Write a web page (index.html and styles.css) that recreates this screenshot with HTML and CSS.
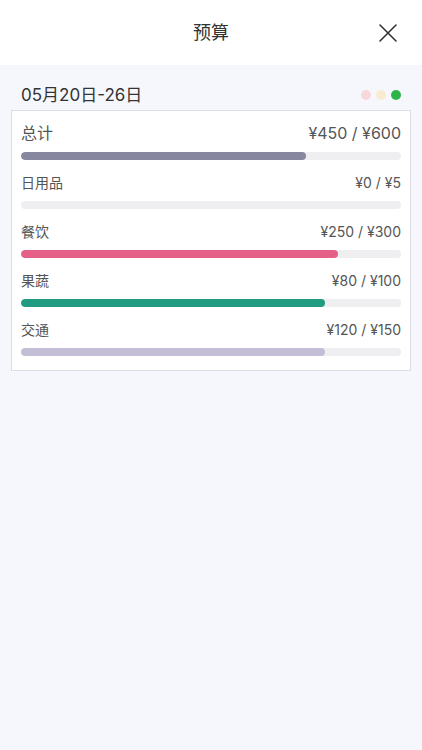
FILE: index.html
```html
<!DOCTYPE html>
<html lang="zh-CN">
<head>
    <meta charset="UTF-8">
    <meta name="viewport" content="width=device-width, initial-scale=1.0">
    <title>预算</title>
    <link rel="stylesheet" href="styles.css">
</head>
<body>

    <header class="topbar">
        <span></span>
        <h1 class="title">预算</h1>
        <button class="close-btn" aria-label="关闭">
            <svg width="20" height="20" viewBox="0 0 20 20">
                <path d="M2 2 L18 18 M18 2 L2 18" stroke="#333" stroke-width="1.6" fill="none" stroke-linecap="round"/>
            </svg>
        </button>
    </header>

    <main class="content">
        <div class="period">
            <span class="period-date">05月20日-26日</span>
            <div class="dots">
                <span class="dot dot-red"></span>
                <span class="dot dot-yellow"></span>
                <span class="dot dot-green"></span>
            </div>
        </div>

        <section class="card">
            <div class="budget-row total">
                <div class="row-head">
                    <span class="label">总计</span>
                    <span class="amount">¥450 / ¥600</span>
                </div>
                <div class="track"><div class="fill fill-total" style="width: 75%"></div></div>
            </div>
            <div class="budget-row">
                <div class="row-head">
                    <span class="label">日用品</span>
                    <span class="amount">¥0 / ¥5</span>
                </div>
                <div class="track"><div class="fill" style="width: 0%"></div></div>
            </div>
            <div class="budget-row">
                <div class="row-head">
                    <span class="label">餐饮</span>
                    <span class="amount">¥250 / ¥300</span>
                </div>
                <div class="track"><div class="fill fill-food" style="width: 83.33%"></div></div>
            </div>
            <div class="budget-row">
                <div class="row-head">
                    <span class="label">果蔬</span>
                    <span class="amount">¥80 / ¥100</span>
                </div>
                <div class="track"><div class="fill fill-veg" style="width: 80%"></div></div>
            </div>
            <div class="budget-row">
                <div class="row-head">
                    <span class="label">交通</span>
                    <span class="amount">¥120 / ¥150</span>
                </div>
                <div class="track"><div class="fill fill-transit" style="width: 80%"></div></div>
            </div>
        </section>
    </main>

</body>
</html>
```

FILE: styles.css
```css
* {
    box-sizing: border-box;
}
html, body {
    height: 100%;
}
body {
    margin: 0;
    font-family: Inter, "Noto Sans CJK SC", sans-serif;
    color: #333;
    background-color: #f6f7fc;
    display: flex;
    flex-direction: column;
}
.topbar {
    height: 65px;
    background-color: #fff;
    display: grid;
    grid-template-columns: 1fr auto 1fr;
    align-items: center;
    flex-shrink: 0;
}
.title {
    margin: 0;
    font-size: 18px;
    font-weight: 400;
    line-height: 24px;
    color: #333;
}
.close-btn {
    justify-self: end;
    margin-right: 24px;
    padding: 0;
    background: none;
    border: none;
    width: 20px;
    height: 20px;
    cursor: pointer;
}
.close-btn svg {
    display: block;
}
.content {
    flex: 1;
    padding: 0 11px;
}
.period {
    display: flex;
    justify-content: space-between;
    align-items: center;
    margin-top: 18px;
    margin-bottom: 3px;
    padding: 0 10px;
}
.period-date {
    font-size: 17px;
    line-height: 24px;
    color: #333;
}
.dots {
    display: flex;
    gap: 5px;
}
.dot {
    width: 10px;
    height: 10px;
    border-radius: 50%;
}
.dot-red {
    background-color: #f9d8dc;
}
.dot-yellow {
    background-color: #f9ebd1;
}
.dot-green {
    background-color: #2db449;
}
.card {
    background-color: #fff;
    border: 1px solid #dedde6;
    padding: 12px 9px 14px;
    display: flex;
    flex-direction: column;
    gap: 13px;
}
.row-head {
    display: flex;
    justify-content: space-between;
    align-items: center;
    font-size: 14px;
    line-height: 20px;
    color: #555;
    margin-bottom: 8px;
}
.total .row-head {
    font-size: 16px;
    line-height: 21px;
}
.track {
    height: 8px;
    border-radius: 4px;
    background-color: #efeff1;
    overflow: hidden;
}
.fill {
    height: 100%;
    border-radius: 4px;
}
.fill-total {
    background-color: #87879f;
}
.fill-food {
    background-color: #e46087;
}
.fill-veg {
    background-color: #219b80;
}
.fill-transit {
    background-color: #c3bed6;
}
```
